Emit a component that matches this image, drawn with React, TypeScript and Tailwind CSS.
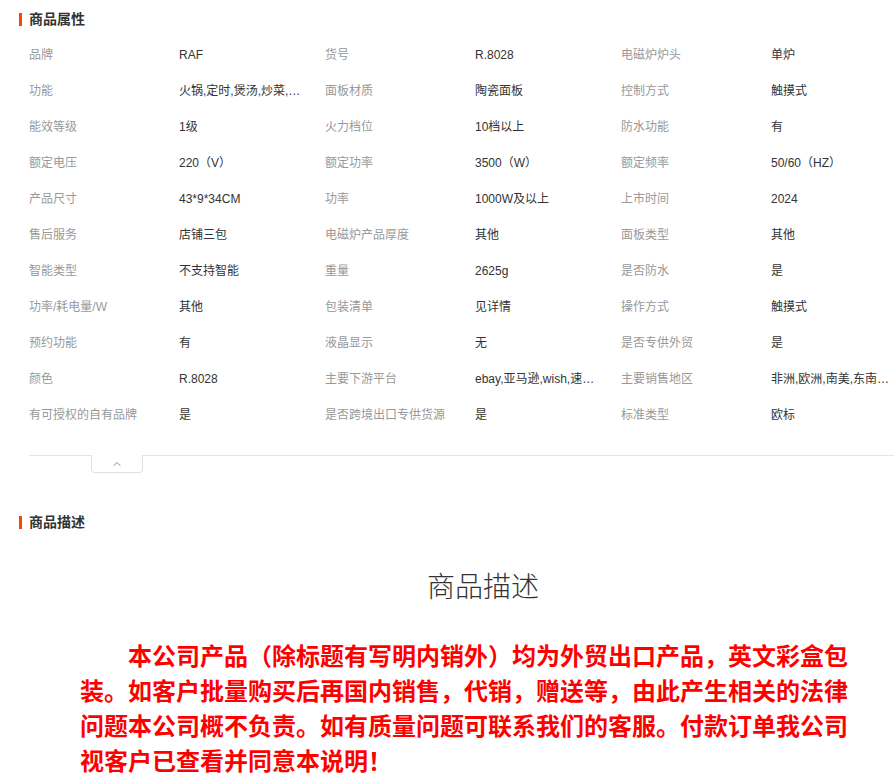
import { ChevronUp } from 'lucide-react';

const rows: [string, string, string, string, string, string][] = [
    ['品牌', 'RAF', '货号', 'R.8028', '电磁炉炉头', '单炉'],
    ['功能', '火锅,定时,煲汤,炒菜,蒸煮,烧水', '面板材质', '陶瓷面板', '控制方式', '触摸式'],
    ['能效等级', '1级', '火力档位', '10档以上', '防水功能', '有'],
    ['额定电压', '220（V）', '额定功率', '3500（W）', '额定频率', '50/60（HZ）'],
    ['产品尺寸', '43*9*34CM', '功率', '1000W及以上', '上市时间', '2024'],
    ['售后服务', '店铺三包', '电磁炉产品厚度', '其他', '面板类型', '其他'],
    ['智能类型', '不支持智能', '重量', '2625g', '是否防水', '是'],
    ['功率/耗电量/W', '其他', '包装清单', '见详情', '操作方式', '触摸式'],
    ['预约功能', '有', '液晶显示', '无', '是否专供外贸', '是'],
    ['颜色', 'R.8028', '主要下游平台', 'ebay,亚马逊,wish,速卖通', '主要销售地区', '非洲,欧洲,南美,东南亚,中东'],
    ['有可授权的自有品牌', '是', '是否跨境出口专供货源', '是', '标准类型', '欧标'],
];

function SectionTitle({ text }: { text: string }) {
    return (
        <div className="flex items-center h-[20px] pl-[19px]">
            <div className="w-[3px] h-[13px] bg-[#ff4400] mr-[7px]"></div>
            <span className="text-[14px] font-bold text-[#333]">{text}</span>
        </div>
    );
}

export default function App() {
    return (
        <div
            className="w-[894px] bg-white overflow-hidden"
            style={{ fontFamily: '"Liberation Sans", "Noto Sans CJK SC", sans-serif' }}
        >
            {/* 商品属性 */}
            <div className="pt-[9px]">
                <SectionTitle text="商品属性" />
            </div>

            <div className="pl-[29px] pt-[8px]">
                {rows.map((r, i) => (
                    <div key={i} className="flex h-[36px] items-center text-[12px]">
                        <div className="w-[150px] text-[#999] truncate">{r[0]}</div>
                        <div className="w-[146px] pr-[24px] text-[#333] truncate">{r[1]}</div>
                        <div className="w-[150px] text-[#999] truncate">{r[2]}</div>
                        <div className="w-[146px] pr-[24px] text-[#333] truncate">{r[3]}</div>
                        <div className="w-[150px] text-[#999] truncate">{r[4]}</div>
                        <div className="w-[120px] text-[#333] truncate">{r[5]}</div>
                    </div>
                ))}
            </div>

            {/* Collapse divider */}
            <div className="relative ml-[29px] mt-[22px] border-t border-[#e5e5e5] h-[17px]">
                <div className="absolute left-[62px] top-[-1px] w-[52px] h-[18px] bg-white border border-t-0 border-[#e0e0e0] rounded-b-[4px] flex items-center justify-center">
                    <ChevronUp size={12} strokeWidth={2} className="text-[#888]" />
                </div>
            </div>

            {/* 商品描述 */}
            <div className="mt-[40px]">
                <SectionTitle text="商品描述" />
            </div>

            <div className="ml-[80px] w-[806px] mt-[36px] text-center text-[28px] leading-[40px] text-[#333] font-light">
                商品描述
            </div>

            <p className="ml-[80px] w-[780px] mt-[31px] indent-[48px] text-[24px] leading-[35px] font-bold text-[#ff0000]">
                本公司产品（除标题有写明内销外）均为外贸出口产品，英文彩盒包装。如客户批量购买后再国内销售，代销，赠送等，由此产生相关的法律问题本公司概不负责。如有质量问题可联系我们的客服。付款订单我公司视客户已查看并同意本说明！
            </p>
        </div>
    );
}
